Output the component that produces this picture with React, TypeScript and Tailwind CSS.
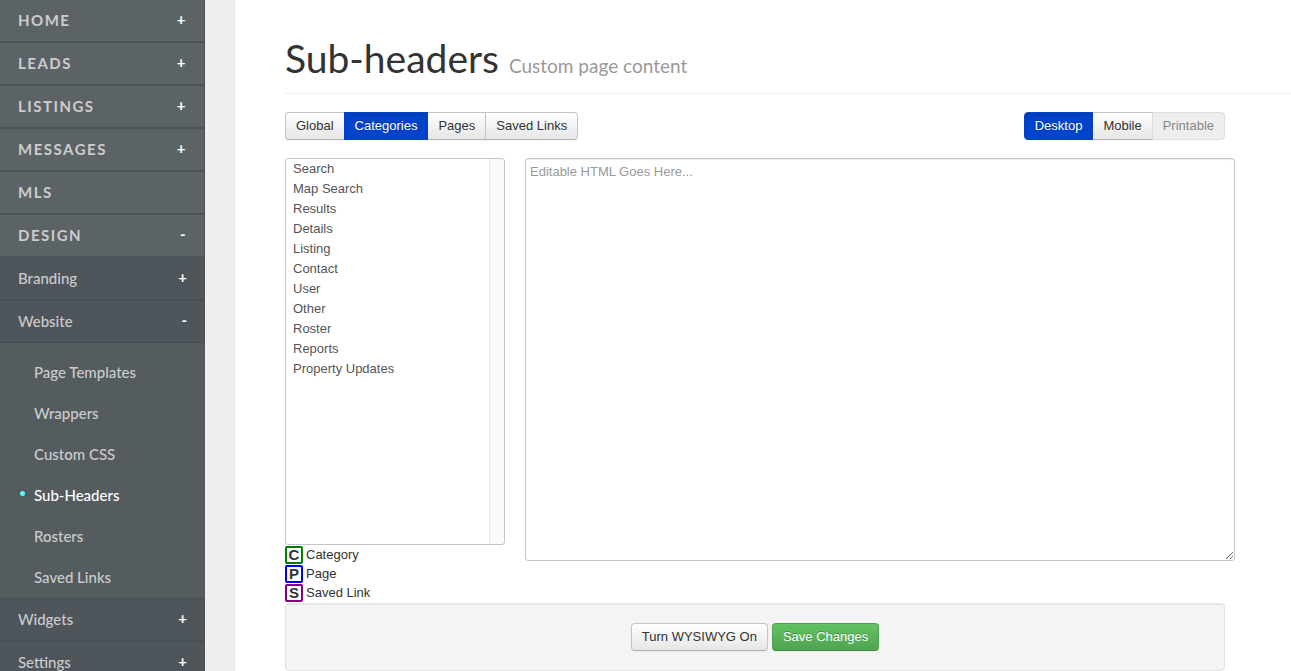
import clsx from "clsx"

const topLinks = [
  { label: "Home", toggle: "+" },
  { label: "Leads", toggle: "+" },
  { label: "Listings", toggle: "+" },
  { label: "Messages", toggle: "+" },
  { label: "MLS", toggle: "" },
  { label: "Design", toggle: "-" },
]

const websiteLinks = ["Page Templates", "Wrappers", "Custom CSS", "Sub-Headers", "Rosters", "Saved Links"]

const categories = [
  "Search",
  "Map Search",
  "Results",
  "Details",
  "Listing",
  "Contact",
  "User",
  "Other",
  "Roster",
  "Reports",
  "Property Updates",
]

const legend = [
  { letter: "C", label: "Category", border: "border-[#008000]" },
  { letter: "P", label: "Page", border: "border-[#0000ff]" },
  { letter: "S", label: "Saved Link", border: "border-[#800080]" },
]

interface NavRowProps {
  label: string
  toggle: string
  className?: string
}

function TopRow({ label, toggle }: NavRowProps) {
  return (
    <a
      href="#"
      className="flex h-[43px] items-center justify-between border-r border-b-2 border-[#4c5457] bg-[#5c6366] pr-[17px] pb-0.5 pl-[18px] text-[15px] font-bold tracking-widest text-[#cccccc] uppercase"
    >
      {label}
      <span className="pb-0.5 text-white">{toggle}</span>
    </a>
  )
}

function SectionRow({ label, toggle, className }: NavRowProps) {
  return (
    <a
      href="#"
      className={clsx(
        "flex items-center justify-between border-r border-[#474f54] bg-[#4e555b] pr-[17px] pb-0.5 pl-[18px] text-[15px] font-medium text-[#cccccc]",
        className,
      )}
    >
      {label}
      <span className="pb-0.5 font-bold text-white">{toggle}</span>
    </a>
  )
}

function Sidebar() {
  return (
    <nav className="w-[205px] shrink-0 bg-[#555c5f] font-[Lato,sans-serif] leading-5">
      {topLinks.map((link) => (
        <TopRow key={link.label} {...link} />
      ))}
      <SectionRow label="Branding" toggle="+" className="h-[43px] border-b-2" />
      <SectionRow label="Website" toggle="-" className="h-[42px] border-b" />
      <ul className="pt-2 pb-px">
        {websiteLinks.map((label) => {
          const active = label === "Sub-Headers"
          return (
            <li key={label}>
              <a
                href="#"
                className={clsx(
                  "flex h-[41px] items-center pl-5 text-[15px] font-medium",
                  active ? "text-white" : "text-[#cccccc]",
                )}
              >
                <span className={clsx("mr-[9px] mb-0.5 size-[5px] rounded-full", active && "bg-[#5ff5ff]")} />
                {label}
              </a>
            </li>
          )
        })}
      </ul>
      <SectionRow label="Widgets" toggle="+" className="h-11 border-t border-b-2" />
      <SectionRow label="Settings" toggle="+" className="h-[43px] border-b-2" />
    </nav>
  )
}

interface ButtonGroupProps {
  label: string
  items: string[]
  active: string
  disabled?: string
}

function ButtonGroup({ label, items, active, disabled }: ButtonGroupProps) {
  return (
    <div role="group" aria-label={label} className="flex">
      {items.map((item) => (
        <button
          key={item}
          type="button"
          disabled={item === disabled}
          aria-pressed={item === active}
          className={clsx(
            "-ml-px h-7 border px-2.5 pb-px first:ml-0 first:rounded-l last:rounded-r",
            item === active &&
              "relative border-[#0044cc] bg-[#0044cc] text-white shadow-[inset_0_2px_4px_rgba(0,0,0,0.15)] [text-shadow:0_-1px_0_rgba(0,0,0,0.25)]",
            item === disabled && "border-[#dddddd] bg-[#eeeeee] text-[#888888]",
            item !== active &&
              item !== disabled &&
              "border-[#c5c5c5] border-b-[#b3b3b3] bg-linear-to-b from-white to-[#e6e6e6] shadow-[0_1px_2px_rgba(0,0,0,0.05)]",
          )}
        >
          {item}
        </button>
      ))}
    </div>
  )
}

export default function App() {
  return (
    <div className="flex h-screen overflow-hidden bg-[#efefef] font-['Liberation_Sans',Arial,sans-serif] text-[13px] leading-5 text-[#333333]">
      <Sidebar />
      <main className="ml-[29px] min-w-0 grow border-l border-[#e5e5e5] bg-white pl-[50px]">
        <header className="border-b border-[#eeeeee] pt-[38px] pb-[15px] font-[Lato,sans-serif]">
          <h1 className="text-[39px] leading-10">
            Sub-headers <small className="text-[19px] leading-5 text-[#999999]">Custom page content</small>
          </h1>
        </header>

        <div className="flex justify-between pt-[18px] pr-[66px]">
          <ButtonGroup
            label="Content scope"
            items={["Global", "Categories", "Pages", "Saved Links"]}
            active="Categories"
          />
          <ButtonGroup
            label="Device"
            items={["Desktop", "Mobile", "Printable"]}
            active="Desktop"
            disabled="Printable"
          />
        </div>

        <div className="flex gap-5 pt-[18px] pr-14">
          <div className="w-[220px] shrink-0">
            <select
              multiple
              aria-label="Categories"
              className="block h-[387px] w-full rounded-[3px] border border-[#c5c5c5] bg-[linear-gradient(to_left,#fafafa_14px,#e8e8e8_14px,#e8e8e8_15px,white_15px)] px-1 pt-0.5 text-[#555555] outline-none"
            >
              {categories.map((name) => (
                <option key={name} className="h-5 px-[3px] leading-5">
                  {name}
                </option>
              ))}
            </select>
            <ul className="pt-px">
              {legend.map(({ letter, label, border }) => (
                <li key={letter} className="flex h-[19px] items-start gap-[3px] leading-[18px]">
                  <span
                    className={clsx(
                      "flex size-[18px] items-center justify-center rounded-[2px] border-2 text-[15px] font-bold",
                      border,
                    )}
                  >
                    {letter}
                  </span>
                  {label}
                </li>
              ))}
            </ul>
          </div>
          <textarea
            aria-label="Page HTML"
            placeholder="Editable HTML Goes Here..."
            className="block h-[403px] min-w-0 grow resize rounded-[3px] border border-[#c5c5c5] bg-white px-1 py-[3px] shadow-[inset_0_1px_1px_rgba(0,0,0,0.075)] outline-none placeholder:text-[#999999]"
          />
        </div>

        <div className="pr-[66px]">
          <div className="flex justify-center gap-1 rounded border border-[#e3e3e3] bg-[#f4f4f4] py-[19px] shadow-[inset_0_1px_1px_rgba(0,0,0,0.05)]">
            <button
              type="button"
              className="h-7 rounded border border-[#c5c5c5] border-b-[#b3b3b3] bg-linear-to-b from-white to-[#e6e6e6] px-2.5 pb-px shadow-[0_1px_2px_rgba(0,0,0,0.05)]"
            >
              Turn WYSIWYG On
            </button>
            <button
              type="button"
              className="h-7 rounded border border-[#4fa04f] border-b-[#3f8a3f] bg-linear-to-b from-[#62c462] to-[#51a351] px-2.5 pb-px text-white shadow-[0_1px_2px_rgba(0,0,0,0.05)] [text-shadow:0_-1px_0_rgba(0,0,0,0.25)]"
            >
              Save Changes
            </button>
          </div>
        </div>
      </main>
    </div>
  )
}
